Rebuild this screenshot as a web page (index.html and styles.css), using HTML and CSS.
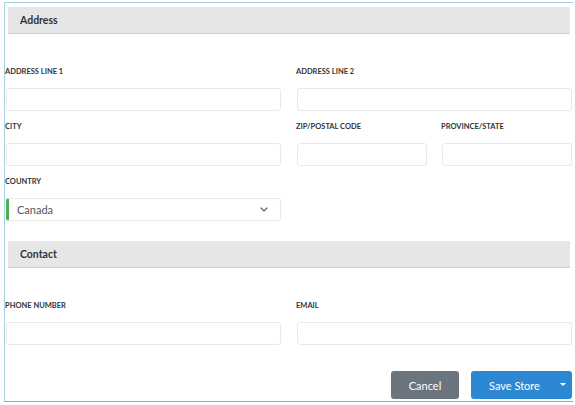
FILE: index.html
```html
<!DOCTYPE html>
<html lang="en">
<head>
<meta charset="utf-8">
<title>Store details</title>
<link rel="stylesheet" href="styles.css">
</head>
<body>
<form class="store-form">
  <div class="section-head">Address</div>
  <div class="section-body">
    <div class="row">
      <div class="field">
        <label class="field-label">ADDRESS LINE 1</label>
        <input class="text-input" type="text">
      </div>
      <div class="field">
        <label class="field-label">ADDRESS LINE 2</label>
        <input class="text-input" type="text">
      </div>
    </div>
    <div class="row">
      <div class="field">
        <label class="field-label">CITY</label>
        <input class="text-input" type="text">
      </div>
      <div class="split">
        <div class="field">
          <label class="field-label">ZIP/POSTAL CODE</label>
          <input class="text-input" type="text">
        </div>
        <div class="field">
          <label class="field-label">PROVINCE/STATE</label>
          <input class="text-input" type="text">
        </div>
      </div>
    </div>
    <div class="row">
      <div class="field">
        <label class="field-label">COUNTRY</label>
        <div class="select-box">
          <span class="select-value">Canada</span>
          <svg class="chevron" width="8" height="5" viewBox="0 0 8 5"><polyline points="0.7,0.7 4,4 7.3,0.7" fill="none" stroke="#555" stroke-width="1.2"/></svg>
        </div>
      </div>
    </div>
  </div>
  <div class="section-head contact">Contact</div>
  <div class="section-body">
    <div class="row">
      <div class="field">
        <label class="field-label">PHONE NUMBER</label>
        <input class="text-input" type="text">
      </div>
      <div class="field">
        <label class="field-label">EMAIL</label>
        <input class="text-input" type="text">
      </div>
    </div>
  </div>
  <div class="actions">
    <button class="btn btn-cancel" type="button">Cancel</button>
    <button class="btn btn-save" type="button">Save Store<span class="caret"></span></button>
  </div>
</form>
</body>
</html>
```
FILE: styles.css
```css
* { box-sizing: border-box; }

body {
  margin: 2px 2px 0 4px;
  background: #fff;
  font-family: "Lato", "Open Sans", sans-serif;
  color: #333;
}

.store-form {
  width: 570px;
  height: 400px;
  border: 1px solid #a9d2dc;
  border-bottom-color: #7fb5bb;
  padding: 4px 0 0 0;
}

.section-head {
  margin: 0 3px;
  height: 27px;
  background: #e6e6e6;
  border-bottom: 1px solid #cfcfcf;
  padding-left: 12px;
  font-size: 10.5px;
  font-weight: 700;
  line-height: 26px;
  color: #333;
}

.section-head.contact { margin-top: 20px; }

.section-body {
  padding: 32px 0 0 1px;
}

.row {
  display: grid;
  grid-template-columns: 275px 275px;
  column-gap: 16px;
  margin-bottom: 10px;
}

.row:last-child { margin-bottom: 0; }

.split {
  display: grid;
  grid-template-columns: 130px 130px;
  column-gap: 15px;
}

.field {
  display: flex;
  flex-direction: column;
}

.field-label {
  font-size: 7.5px;
  font-weight: 700;
  line-height: 12px;
  height: 12px;
  color: #333;
  margin-bottom: 10px;
  margin-left: -1px;
}

.text-input {
  height: 23px;
  width: 100%;
  border: 1px solid #e9e9e9;
  border-radius: 3px;
  background: #fff;
  margin: 0;
  padding: 0 8px;
  font: inherit;
}

.select-box {
  height: 23px;
  display: flex;
  align-items: center;
  justify-content: space-between;
  border: 1px solid #e9e9e9;
  border-left: 3px solid #4caf50;
  border-radius: 3px;
  padding: 0 12px 0 8px;
  font-size: 11px;
  color: #555;
}

.actions {
  display: flex;
  justify-content: flex-end;
  gap: 12px;
  margin-top: 26px;
  padding-right: 1px;
}

.btn {
  height: 28px;
  border: none;
  border-radius: 3px;
  color: #fff;
  font-family: inherit;
  font-size: 11px;
  padding: 0;
  cursor: pointer;
}

.btn-cancel {
  width: 68px;
  background: #6c757d;
}

.btn-save {
  width: 101px;
  background: #2d88d4;
  position: relative;
  padding-right: 14px;
}

.caret {
  position: absolute;
  right: 6px;
  top: 12px;
  width: 0;
  height: 0;
  border-left: 3px solid transparent;
  border-right: 3px solid transparent;
  border-top: 3px solid #fff;
}
```
